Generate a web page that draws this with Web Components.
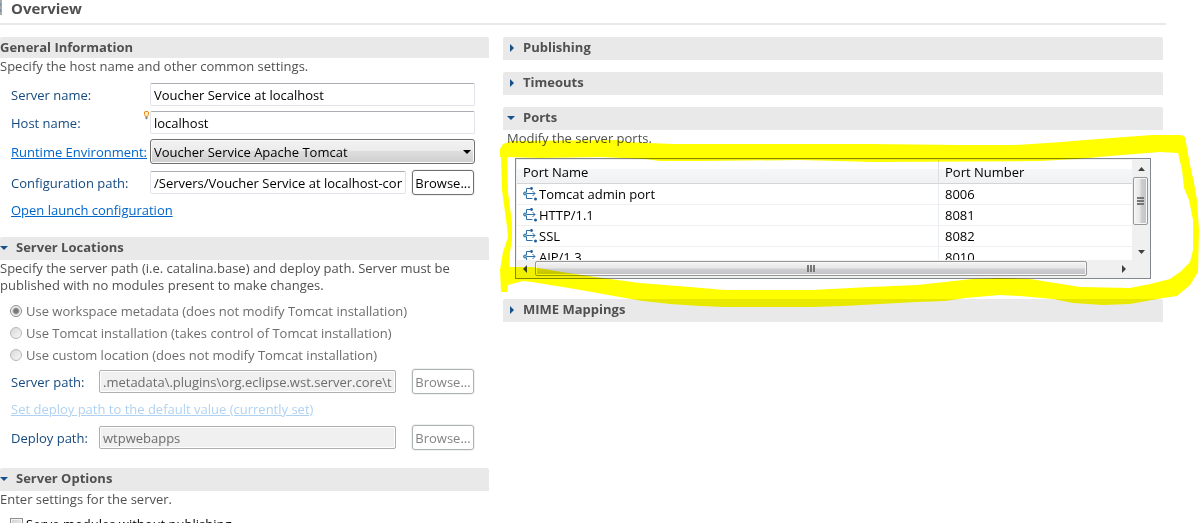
<!DOCTYPE html>
<html lang="en">
<head>
<meta charset="utf-8">
<title>Overview</title>
<style>
  html, body { margin: 0; height: 100%; background: #fff; overflow: hidden; }
  body { font: 13px/18px "Open Sans", "Noto Sans", sans-serif; color: #505050; }
</style>
</head>
<body>
<editor-page heading="Overview">
  <form-section slot="left" heading="General Information" static>
    <span slot="description">Specify the host name and other common settings.</span>
    <text-field label="Server name:" value="Voucher Service at localhost"></text-field>
    <text-field label="Host name:" value="localhost" hint></text-field>
    <select-field label="Runtime Environment:" value="Voucher Service Apache Tomcat"></select-field>
    <text-field label="Configuration path:" value="/Servers/Voucher Service at localhost-config" browse></text-field>
    <action-link>Open launch configuration</action-link>
  </form-section>

  <form-section slot="left" heading="Server Locations" open>
    <span slot="description">Specify the server path (i.e. catalina.base) and deploy path. Server must be published with no modules present to make changes.</span>
    <radio-list>
      <option value="workspace">Use workspace metadata (does not modify Tomcat installation)</option>
      <option value="tomcat">Use Tomcat installation (takes control of Tomcat installation)</option>
      <option value="custom">Use custom location (does not modify Tomcat installation)</option>
    </radio-list>
    <text-field label="Server path:" value=".metadata\.plugins\org.eclipse.wst.server.core\tmp0" browse disabled></text-field>
    <action-link disabled>Set deploy path to the default value (currently set)</action-link>
    <text-field label="Deploy path:" value="wtpwebapps" browse disabled></text-field>
  </form-section>

  <form-section slot="left" heading="Server Options" open>
    <span slot="description">Enter settings for the server.</span>
    <check-field label="Serve modules without publishing"></check-field>
  </form-section>

  <form-section slot="right" heading="Publishing"></form-section>
  <form-section slot="right" heading="Timeouts"></form-section>
  <form-section slot="right" heading="Ports" open inset>
    <span slot="description">Modify the server ports.</span>
    <port-table></port-table>
    <marker-loop></marker-loop>
  </form-section>
  <form-section slot="right" heading="MIME Mappings"></form-section>
</editor-page>

<script>
function define(name, render, init) {
  customElements.define(name, class extends HTMLElement {
    connectedCallback() {
      if (this.shadowRoot) return;
      this.attachShadow({ mode: 'open' }).innerHTML = render(this);
      if (init) init(this, this.shadowRoot);
    }
  });
}

define('editor-page', el => `
  <style>
    :host { display: block; height: 100%; overflow: hidden; }
    header { display: flex; align-items: flex-start; height: 23px; margin-right: 33px; border-bottom: 2px solid #e8e8e8; }
    header svg { width: 3px; height: 15px; margin-right: 8px; }
    h1 { margin: 0; font-size: 15px; line-height: 16px; font-weight: 700; color: #505050; }
    main { display: grid; grid-template-columns: 489fr 660fr; gap: 14px; margin: 12px 36px 0 0; }
    .left, .right { min-width: 0; display: flex; flex-direction: column; }
    .left { gap: 16px; }
    .right { gap: 12px; }
  </style>
  <header>
    <svg viewBox="0 0 3 15" aria-hidden="true"><path d="M0 0h2v15H0z" fill="#a9a9a9"/><path d="M0 3h1v3H0zM0 9h1v3H0z" fill="#7c8fa8"/></svg>
    <h1>${el.getAttribute('heading')}</h1>
  </header>
  <main>
    <div class="left"><slot name="left"></slot></div>
    <div class="right"><slot name="right"></slot></div>
  </main>`);

define('form-section', el => {
  const title = el.getAttribute('heading');
  const fixed = el.hasAttribute('static');
  return `
  <style>
    :host { display: block; position: relative; }
    h2 { margin: 0; font-size: 13px; line-height: 21px; font-weight: 700; color: #505050; background: #e9e9e9; border-radius: 2px 2px 0 0; }
    button { display: flex; align-items: center; width: 100%; height: 23px; padding: 0 0 2px; border: 0; background: none; font: inherit; color: inherit; text-align: left; }
    svg { width: 8px; height: 8px; margin-right: 8px; fill: #154f8c; }
    :host([slot="right"]) svg { margin: 0 8px 0 4px; }
    :host([open]) .shut, :host(:not([open])) .down { display: none; }
    .body { display: none; }
    :host([open]) .body, :host([static]) .body { display: block; }
    .description { line-height: 17px; padding-right: 14px; }
    :host([inset]) .description { padding-left: 4px; }
    .content { display: flex; flex-direction: column; gap: 5px; padding: 6px 14px 2px 11px; }
    :host([static]) .content { padding-top: 8px; }
    :host([inset]) .content { padding: 11px 12px 8px; }
  </style>
  <h2>${fixed ? title : `<button type="button" aria-expanded="${el.hasAttribute('open')}">
    <svg class="down" viewBox="0 0 8 8" aria-hidden="true"><path d="M0 2h8L4 6z"/></svg>
    <svg class="shut" viewBox="0 0 8 8" aria-hidden="true"><path d="M3 0l4 4-4 4z"/></svg>${title}</button>`}</h2>
  <div class="body">
    <div class="description"><slot name="description"></slot></div>
    <div class="content"><slot></slot></div>
  </div>`;
}, (el, root) => {
  const button = root.querySelector('button');
  if (button) button.onclick = () => button.setAttribute('aria-expanded', el.toggleAttribute('open'));
});

const fieldStyle = `
  :host { display: flex; align-items: center; position: relative; }
  label, .label { flex: none; width: 139px; color: #154a80; }
  a { color: #0066cc; }
  input, select { box-sizing: border-box; flex: 1; min-width: 0; font: inherit; color: #000; border-radius: 2px; }
  input { height: 23px; padding: 0 3px; border: 1px solid #e2e3ea; border-top-color: #abadb3; background: #fff; }
  button { box-sizing: border-box; flex: none; width: 62px; height: 25px; margin: 0 1px 0 6px; padding: 0; border: 1px solid #707070; border-radius: 3px; background: #fff; box-shadow: 0 0 0 1px #f0f0f0; font: inherit; color: #000; white-space: nowrap; }
  :host([disabled]) label { width: 88px; }
  :host([disabled]) input { border-color: #afafaf; background: #f0f0f0; box-shadow: inset 0 0 0 1px #fff; color: #6d6d6d; }
  :host([disabled]) button { margin-left: 16px; border-color: #adb2b5; color: #838383; }
  .bulb { position: absolute; left: 133px; top: 0; width: 5px; height: 9px; }`;

define('text-field', el => {
  const off = el.hasAttribute('disabled') ? 'disabled' : '';
  return `
  <style>${fieldStyle}</style>
  <label for="field">${el.getAttribute('label')}</label>
  ${el.hasAttribute('hint') ? '<svg class="bulb" viewBox="0 0 5 9" aria-hidden="true"><path d="M1.5 5.5.5 3.5V1l.6-.5h2.800l.6.5v2.500l-1 2z" fill="#fff0c8" stroke="#e58a1f"/><path d="M1.500 6h2v1.500l-1 1-1-1z" fill="#7d8791"/></svg>' : ''}
  <input id="field" type="text" ${off} value="${el.getAttribute('value')}">
  ${el.hasAttribute('browse') ? `<button type="button" ${off}>Browse...</button>` : ''}`;
});

define('select-field', el => `
  <style>${fieldStyle}
    select { appearance: none; height: 25px; padding: 0 24px 0 3px; border: 1px solid #707070; border-radius: 3px; background: linear-gradient(#f2f2f2, #ebebeb 50%, #ddd 50%, #cfcfcf); box-shadow: inset 0 0 0 1px #fafafa; }
    .arrow { position: absolute; right: 4px; top: 11px; width: 8px; height: 4px; pointer-events: none; }
    :host { padding-bottom: 1px; }
  </style>
  <div class="label"><a href="#runtime">${el.getAttribute('label')}</a></div>
  <select aria-label="Runtime Environment"><option>${el.getAttribute('value')}</option></select>
  <svg class="arrow" viewBox="0 0 8 4" aria-hidden="true"><path d="M0 0h8L4 4z"/></svg>`);

define('action-link', el => `
  <style>
    :host { display: block; padding: 2px 0; line-height: 17px; }
    :host(:last-child) { padding-bottom: 0; }
    a { color: #0066cc; }
    :host([disabled]) a { color: #b0d2f2; }
  </style>
  <a href="#action" ${el.hasAttribute('disabled') ? 'aria-disabled="true"' : ''}><slot></slot></a>`);

const toggleStyle = `
  label { display: flex; align-items: center; height: 22px; color: #6d6d6d; white-space: nowrap; }
  input { appearance: none; box-sizing: border-box; flex: none; width: 12px; height: 12px; margin: 0 4px 0 -1px; border: 1px solid #b8b8b8; background: #f0f0f0; }`;

define('radio-list', el => `
  <style>
    :host { display: block; margin-bottom: -2px; }
    ${toggleStyle}
    input { border-radius: 50%; background: linear-gradient(135deg, #d8d8d8, #f8f8f8); }
    input:checked { border-color: #8c8c8c; background: radial-gradient(circle, #777 0 2px, #aaa 3px, #f4f4f4 4px); }
  </style>
  ${[...el.querySelectorAll('option')].map((o, i) => `
    <label><input type="radio" name="location" value="${o.value}" disabled ${i ? '' : 'checked'}>${o.textContent}</label>`).join('')}`);

define('check-field', el => `
  <style>
    :host { display: block; }
    ${toggleStyle}
    label { height: 20px; color: #000; }
    input { width: 13px; height: 13px; margin-right: 3px; border-color: #8e8f8f; background: linear-gradient(135deg, #cbcfd5, #f6f6f6); box-shadow: inset 0 0 0 1px #f4f4f4; }
  </style>
  <label><input type="checkbox">${el.getAttribute('label')}</label>`);

const ports = [['Tomcat admin port', 8006], ['HTTP/1.1', 8081], ['SSL', 8082], ['AJP/1.3', 8010]];
const portIcon = `<svg viewBox="0 0 14 14" aria-hidden="true">
  <g fill="none" stroke="#2f6fa8"><path d="M3.500 5V1.500H7M3.500 8v3.500H9.500M4 6.500h8M9.500 4l2.500 2.500L9.500 9"/></g>
  <circle cx="2" cy="6.500" r="1.500" fill="#7fbcc0" stroke="#2f6fa8"/>
  <circle cx="8.500" cy="1.500" r="1.400" fill="#1d5d9b"/><circle cx="12.500" cy="12" r="1.500" fill="#1d5d9b"/></svg>`;

define('port-table', () => `
  <style>
    :host { display: grid; grid-template-columns: 1fr 17px; grid-template-rows: 100px 17px; box-sizing: border-box; padding: 1px; border: 1px solid #828790; background: #f0f0f0; color: #000; }
    .view { overflow: hidden; background: #fff; }
    table { width: 100%; border-collapse: separate; border-spacing: 0; table-layout: fixed; }
    th, td { box-sizing: border-box; padding: 0 6px; text-align: left; font-weight: 400; white-space: nowrap; }
    th { height: 24px; border-bottom: 1px solid #d5d5d5; background: linear-gradient(#fff 40%, #f5f6f8 40%, #f1f2f4); }
    th:first-child { width: 422px; border-right: 1px solid #dedfe1; }
    td { height: 21px; border-bottom: 1px solid #f0f0f0; }
    td:first-child { border-right: 1px solid #e9eef5; }
    .name { display: flex; align-items: center; gap: 2px; }
    .name svg { width: 14px; height: 14px; }
    .bar { display: flex; align-items: center; justify-content: space-between; }
    .bar svg { width: 16px; height: 16px; fill: #404040; }
    .vertical { flex-direction: column; }
    .thumb { box-sizing: border-box; display: flex; align-items: center; justify-content: center; gap: 1px; border: 1px solid #979797; border-radius: 2px; box-shadow: inset 0 0 0 1px #f8f8f8; }
    .thumb i { background: #777; width: 2px; height: 7px; }
    .vertical .thumb { width: 15px; height: 48px; flex-direction: column; background: linear-gradient(90deg, #f4f4f4, #e6e6e6 48%, #d0d0d3 52%, #c2c2c6); margin-bottom: 18px; }
    .vertical .thumb i { width: 7px; height: 2px; }
    .horizontal .track { flex: 1; padding-left: 2px; }
    .horizontal .thumb { width: 95%; height: 15px; background: linear-gradient(#f4f4f4, #e6e6e6 48%, #d0d0d3 52%, #c2c2c6); }
  </style>
  <div class="view"><table>
    <thead><tr><th>Port Name</th><th>Port Number</th></tr></thead>
    <tbody>${ports.map(([name, number]) => `<tr><td><div class="name">${portIcon}${name}</div></td><td>${number}</td></tr>`).join('')}</tbody>
  </table></div>
  <div class="bar vertical">
    <svg viewBox="0 0 16 16" aria-hidden="true"><path d="M5 11h7L8.500 7z"/></svg>
    <div class="thumb"><i></i><i></i><i></i></div>
    <svg viewBox="0 0 16 16" aria-hidden="true"><path d="M5 6h7l-3.500 4z"/></svg>
  </div>
  <div class="bar horizontal">
    <svg viewBox="0 0 16 16" aria-hidden="true"><path d="M10 4v8L6 8z"/></svg>
    <div class="track"><div class="thumb"><i></i><i></i><i></i></div></div>
    <svg viewBox="0 0 16 16" aria-hidden="true"><path d="M6 4v8l4-4z"/></svg>
  </div>`);

/* Highlighter stroke drawn round the port list, over the section's edges. */
define('marker-loop', () => `
  <style>
    :host { position: absolute; left: -5px; top: 21px; width: calc(100% + 41px); height: 190px; mix-blend-mode: multiply; pointer-events: none; z-index: 1; }
    svg { display: block; width: 100%; height: 100%; }
  </style>
  <svg viewBox="498 128 701 190" preserveAspectRatio="none" aria-hidden="true">
    <path fill="#ff0" fill-rule="evenodd" d="M500 149 L503 144 L512 141 L618 140 L628 142 L647 143 L675 144 L870 144 L960 145 L1015 145 L1062 142 L1085 140 L1152 135 L1181 135 L1185 137 L1187 148 L1190 165 L1194 183 L1197 200 L1199 230 L1198 272 L1190 285 L1177 296 L1163 298 L1130 304 L1103 305 L1073 303 L1053 299 L1020 296 L1000 295 L965 298 L945 301 L917 302 L843 306 L812 307 L725 307 L700 306 L670 304 L643 301 L625 298 L575 289 L532 282 L523 281 L508 285 L507 292 L501 292 L500 270 L503 252 L508 237 L507 227 L502 190 L501 157 L500 157 Z
      M507 157 L508 192 L512 223 L512 240 L510 252 L509 267 L532 267 L562 272 L595 277 L640 283 L690 287 L725 290 L812 290 L870 287 L917 285 L945 282 L972 279 L1000 278 L1030 279 L1055 283 L1080 287 L1130 288 L1150 284 L1170 279 L1180 272 L1190 262 L1193 250 L1193 220 L1189 200 L1184 188 L1182 170 L1178 153 L1160 152 L1110 156 L1077 159 L1040 161 L873 162 L800 160 L700 161 L660 161 L645 159 L600 157 L540 158 Z"/>
  </svg>`);
</script>
</body>
</html>
